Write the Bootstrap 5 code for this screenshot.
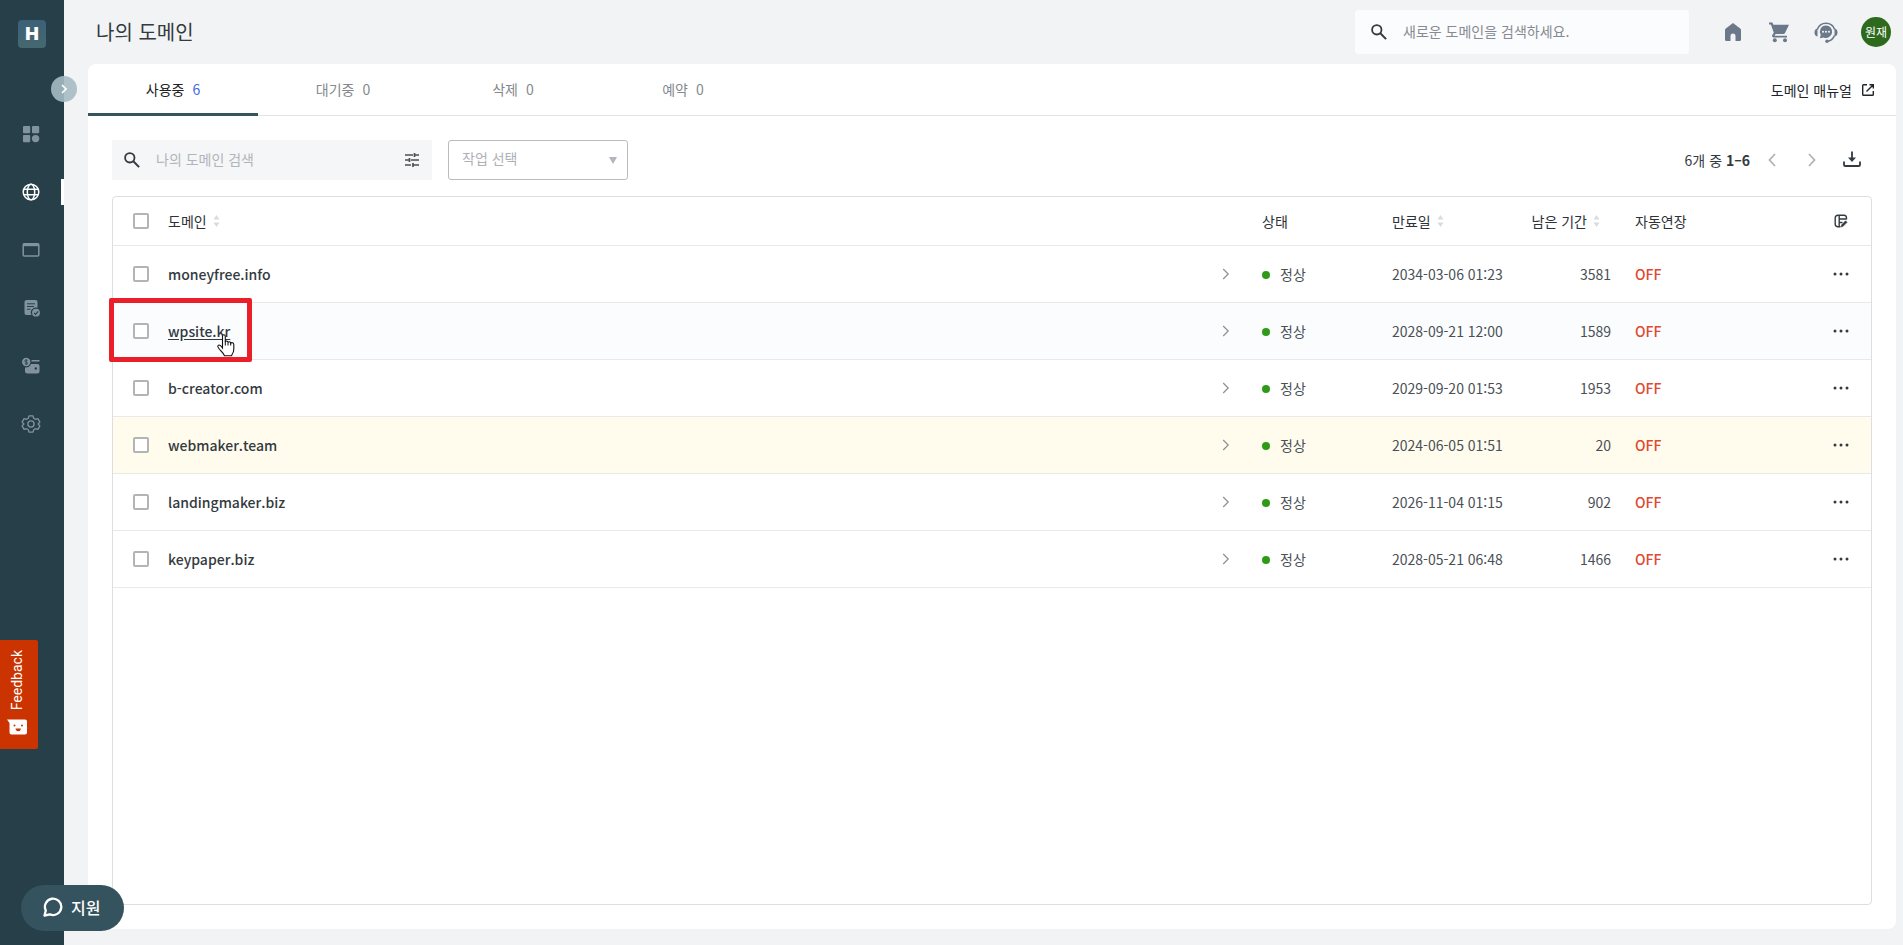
<!DOCTYPE html>
<html lang="ko">
<head>
<meta charset="utf-8">
<meta name="viewport" content="width=device-width, initial-scale=1">
<title>나의 도메인</title>
<link rel="stylesheet" href="https://cdn.jsdelivr.net/npm/bootstrap@5.3.0/dist/css/bootstrap.min.css">
<style>
  body { font-family: "Noto Sans CJK KR", sans-serif; font-size: 14px; line-height: 20px; color: #333a40; background: #f1f3f5; }
  svg { display: block; }
  a { color: inherit; text-decoration: none; }

  /* sidebar */
  .side-rail { width: 64px; background: #263f49; position: sticky; top: 0; height: 100vh; z-index: 5; }
  .brand-tile { width: 28px; height: 28px; border-radius: 4px; background: linear-gradient(#3c6178, #456870); color: #fff; font: 900 18px/28px Inter, sans-serif; text-align: center; margin: 20px 0 57px 18px; }
  .side-link { display: flex; align-items: center; height: 58px; padding-left: 20px; color: #81949d; }
  .side-link.on { color: #fff; background: linear-gradient(#fff, #fff) right center / 3px 26px no-repeat; }
  .rail-toggle { position: absolute; left: 51px; top: 76px; width: 26px; height: 26px; border-radius: 50%; border: 0; padding: 0; background: rgba(166, 187, 195, .9); color: #fff; }

  /* header */
  .top-bar { height: 64px; padding: 0 12px 0 32px; }
  .top-bar h1 { font-size: 20px; line-height: 28px; font-weight: 400; }
  .find-box { width: 334px; height: 44px; border-radius: 4px; background: #fbfcfe; padding: 0 16px; }
  .find-box input, .filter-box input { border: 0; background: none; outline: 0; padding: 0 0 2px; min-width: 0; color: #333a40; }
  .find-box input::placeholder { color: #868b91; opacity: 1; }
  .top-icons { color: #6b788a; gap: 22px; margin-left: 32px; }
  .avatar { width: 30px; height: 30px; border-radius: 50%; background: #2d6a1d; color: #fff; font-size: 12px; border: 0; padding: 0; line-height: 30px; white-space: nowrap; }
  .bare-btn { border: 0; background: none; padding: 0; color: inherit; }

  /* panel */
  .panel { background: #fff; border-radius: 8px; margin: 0 7px 16px 24px; }
  .tab-row { height: 52px; border-bottom: 1px solid #e2e3e5; padding-right: 20px; }
  .tab-row .tab-link { width: 170px; height: 52px; line-height: 20px; padding-top: 15px; text-align: center; color: #84898e; border-bottom: 3px solid transparent; }
  .tab-row .tab-link.on { color: #222; border-color: #36545c; }
  .tab-link span { margin-left: 8px; }
  .tab-link.on span { color: #4169e1; }
  .filter-box { width: 320px; height: 40px; background: #f4f6f8; padding: 0 12px; }
  .filter-box input::placeholder { color: #b1b5b9; opacity: 1; }
  .job-select { width: 180px; height: 40px; border: 1px solid #b9bbbe; border-radius: 3px; color: #aeb1b5; font-size: 14px; line-height: 20px; padding: 7px 13px 11px; appearance: none;
    background: #fff url("data:image/svg+xml,%3Csvg xmlns='http://www.w3.org/2000/svg' viewBox='0 0 8 7'%3E%3Cpath fill='%23b3b5bf' d='M0 0h8L4 7z'/%3E%3C/svg%3E") right 10px center / 8px 7px no-repeat; }
  .pager { padding-right: 2px; }
  .pager span { padding-right: 2px; }
  .pager .save-btn { padding: 0 8px 0 10px; }

  /* table */
  .grid-frame { border: 1px solid #dcdee0; border-radius: 4px; }
  .domain-table { width: 100%; table-layout: fixed; border-collapse: separate; border-spacing: 0; }
  .domain-table th, .domain-table td { padding: 0; border-bottom: 1px solid #e8e9eb; font-weight: 400; white-space: nowrap; }
  .domain-table th { height: 49px; color: #2c3238; }
  .domain-table th .d-flex { gap: 6px; }
  .domain-table td { height: 57px; color: #4a5056; }
  .domain-table td.name { color: #333a40; font-weight: 500; }
  .domain-table .c-menu { color: #333a40; }
  .c-check { width: 55px; } .c-go { width: 48px; } .c-state { width: 130px; } .c-date { width: 119px; }
  .c-left { width: 124px; text-align: right; } .c-auto { width: 176px; } .c-menu { width: 60px; }
  .domain-table td.c-left { padding-right: 24px; }
  .domain-table th.c-left { padding-right: 35px; }
  .domain-table td.c-auto { color: #e04a2f; font-weight: 500; }
  .domain-table tr.hovered td { background: #fafcfe; }
  .domain-table tr.hovered .name a { text-decoration: underline; text-underline-offset: 2px; }
  .domain-table tr.expiring td { background: #fffcee; }
  .tick { display: block; width: 16px; height: 16px; margin: 0 0 0 20px; border: 2px solid #b2b4b6; border-radius: 2px; background: #fff; appearance: none; }
  .tick:checked { background: #36545c; }
  .dot { width: 8px; height: 8px; border-radius: 50%; background: #2e9a18; margin: 2px 10px 0 0; }
  .sorter { color: #d9dbdd; }
  .callout-box { position: absolute; left: -4px; top: -5px; width: 143px; height: 64px; border: 5px solid #ea1f2a; border-radius: 2px; z-index: 2; pointer-events: none; }
  .pointer { position: absolute; left: 49px; top: 31px; z-index: 3; pointer-events: none; }

  /* floating buttons */
  .feedback-btn { position: fixed; left: 0; top: 640px; width: 38px; height: 109px; background: #cb3301; color: #fff; border: 0; border-radius: 0 2px 2px 0; padding: 0 8px 14px 7px; z-index: 10; display: flex; flex-direction: column; justify-content: flex-end; align-items: flex-start; gap: 9px; }
  .feedback-btn span { writing-mode: vertical-rl; transform: rotate(180deg); font: 400 14px/20px Roboto, sans-serif; }
  .support-btn { position: fixed; left: 21px; bottom: 14px; width: 103px; height: 46px; border: 0; border-radius: 23px; background: #34535e; color: #fff; font-size: 16px; font-weight: 500; padding: 0 22px 2px; gap: 8px; z-index: 10; white-space: nowrap; }
</style>
</head>
<body>
<svg width="0" height="0" class="position-absolute" aria-hidden="true">
  <symbol id="i-search" viewBox="0 0 16 16"><circle cx="5.8" cy="5.8" r="4.7" fill="none" stroke="currentColor" stroke-width="1.8"/><path d="M9.3 9.3l5.8 5.8" stroke="currentColor" stroke-width="2"/></symbol>
  <symbol id="i-next" viewBox="0 0 8 14"><path d="M1.2 2l5 5-5 5" fill="none" stroke="currentColor" stroke-width="1.2"/></symbol>
  <symbol id="i-sort" viewBox="0 0 7 12"><path d="M3.5 0l3 4.4h-6zM3.5 12l3-4.4h-6z" fill="currentColor"/></symbol>
  <symbol id="i-dots" viewBox="0 0 16 4"><g fill="currentColor"><circle cx="2" cy="2" r="1.5"/><circle cx="8" cy="2" r="1.5"/><circle cx="14" cy="2" r="1.5"/></g></symbol>
</svg>

<div class="d-flex min-vh-100">
  <nav class="side-rail flex-shrink-0" aria-label="메뉴">
    <a href="#" class="brand-tile d-block">H</a>
    <a href="#" class="side-link" aria-label="대시보드"><svg width="22" height="22" viewBox="0 0 22 22" fill="currentColor"><rect x="3" y="3" width="7.2" height="7.2" rx="1"/><rect x="12" y="3" width="7.2" height="7.2" rx="1"/><rect x="3" y="12" width="7.2" height="7.2" rx="1"/><circle cx="15.6" cy="15.6" r="3.7"/></svg></a>
    <a href="#" class="side-link on" aria-label="도메인"><svg width="22" height="22" viewBox="0 0 22 22" fill="none" stroke="currentColor" stroke-width="1.5"><circle cx="11" cy="11" r="7.8"/><ellipse cx="11" cy="11" rx="3.7" ry="7.8"/><path d="M3.8 8.2h14.4M3.8 13.8h14.4"/></svg></a>
    <a href="#" class="side-link" aria-label="웹사이트"><svg width="22" height="22" viewBox="0 0 22 22" fill="none" stroke="currentColor" stroke-width="1.5"><rect x="3.2" y="4.7" width="15.6" height="12.4" rx="1"/><path d="M3 6h16" stroke-width="2.4"/></svg></a>
    <a href="#" class="side-link" aria-label="인증서"><svg width="22" height="22" viewBox="0 0 22 22"><path fill="currentColor" d="M6.500 3H15.500Q17.500 3 17.500 5v5.800a5 5 0 0 0-6 7.200H6.500q-2 0-2-2V5q0-2 2-2z"/><path d="M7 6.800h8M7 9.500h7M7 12.200h3.500" stroke="#263f49" stroke-width="1"/><circle cx="16" cy="15.700" r="3.900" fill="currentColor"/><path d="M14 15.800l1.500 1.500 2.700-3" fill="none" stroke="#263f49" stroke-width="1.200"/></svg></a>
    <a href="#" class="side-link" aria-label="결제"><svg width="22" height="22" viewBox="0 0 22 22"><path fill="currentColor" d="M11.500 5h8v1.600h-8zM11 9h6.500q2 0 2 2v5.500q0 2-2 2h-10q-2.500 0-2.500-2.500v-3.500a6 6 0 0 0 6-3.500z"/><circle cx="6.200" cy="7" r="4.200" fill="currentColor"/><path d="M7.600 5.400q-2.800-1-2.800.4t1.400 1.300 1.400 1.300-2.800.4M6.200 4.200v5.600" fill="none" stroke="#263f49" stroke-width=".8"/><circle cx="15.800" cy="13.500" r="1.200" fill="#263f49"/></svg></a>
    <a href="#" class="side-link" aria-label="설정"><svg width="22" height="22" viewBox="0 0 22 22" fill="none" stroke="currentColor" stroke-width="1.300" stroke-linejoin="round"><path d="M9 2.900h4l.7 2.400 1.700 1 2.500-.6 2 3.400-1.800 1.900 1.800 1.900-2 3.400-2.500-.6-1.700 1-.7 2.400H9l-.7-2.400-1.700-1-2.500.6-2-3.400L3.900 11 2.100 9.100l2-3.400 2.500.6 1.700-1z"/><circle cx="11" cy="11" r="3.100"/></svg></a>
    <button class="rail-toggle d-flex align-items-center justify-content-center" type="button" aria-label="메뉴 펼치기"><svg width="6" height="10" viewBox="0 0 6 10"><path d="M1 1l4 4-4 4" fill="none" stroke="currentColor" stroke-width="1.700"/></svg></button>
  </nav>

  <div class="d-flex flex-column flex-grow-1">
    <header class="top-bar d-flex align-items-center">
      <h1 class="mb-0 me-auto">나의 도메인</h1>
      <label class="find-box d-flex align-items-center">
        <svg width="16" height="16" class="me-3" aria-label="검색"><use href="#i-search"/></svg>
        <input type="search" class="flex-grow-1" placeholder="새로운 도메인을 검색하세요.">
      </label>
      <div class="top-icons d-flex align-items-center">
        <a href="#" aria-label="홈"><svg width="24" height="24" viewBox="0 0 24 24" fill="currentColor"><path d="M12 3l7.200 5.400q.8.600.8 1.600v9.500q0 1.500-1.500 1.500H14.500v-5a2.500 2.500 0 0 0-5 0v5H5.500Q4 21 4 19.500V10q0-1 .8-1.600z"/></svg></a>
        <a href="#" aria-label="장바구니"><svg width="24" height="24" viewBox="0 0 24 24" fill="currentColor"><path d="M2 2.500h3.400l1 2.200H22l-4 8.300q-.4.900-1.500.9H8.600l-1.100 1.900H20v1.800H6.500q-2-.9-1.200-2.500l1.500-2.400L3.900 4.400H2z"/><circle cx="7.800" cy="20.300" r="2"/><circle cx="18" cy="20.300" r="2"/></svg></a>
        <a href="#" aria-label="고객센터"><svg width="26" height="24" viewBox="0 0 26 24"><path d="M4.300 9.500a9.200 9.200 0 0 1 17.400 0M21.500 15.500a9 9 0 0 1-7.500 5.800" fill="none" stroke="currentColor" stroke-width="1.600"/><path fill="currentColor" d="M4.500 8.500v8Q1.500 16 1.500 12.500t3-4zM21.500 8.500v8q3-.5 3-4t-3-4zM13 5.500a6.200 6.200 0 1 1-2.500 11.900l-3.700.8 1-3.200A6.200 6.200 0 0 1 13 5.500z"/><circle cx="14" cy="21.200" r="1.700" fill="currentColor"/><g fill="#f1f3f5"><circle cx="10" cy="11.700" r="1"/><circle cx="13" cy="11.700" r="1"/><circle cx="16" cy="11.700" r="1"/></g></svg></a>
        <button type="button" class="avatar">원재</button>
      </div>
    </header>

    <main class="panel d-flex flex-column flex-grow-1">
      <div class="tab-row d-flex">
        <a href="#" class="tab-link on">사용중<span>6</span></a>
        <a href="#" class="tab-link">대기중<span>0</span></a>
        <a href="#" class="tab-link">삭제<span>0</span></a>
        <a href="#" class="tab-link">예약<span>0</span></a>
        <a href="#" class="ms-auto d-flex align-items-center gap-2 text-dark">도메인 매뉴얼<svg width="16" height="16" viewBox="0 0 16 16" fill="none" stroke="currentColor" stroke-width="1.400"><path d="M7 2.700H3.500q-.8 0-.8.800v9q0 .8.800.8h9q.8 0 .8-.8V9M9.500 2.700h3.800v3.800M13.300 2.700L6.500 9.500"/></svg></a>
      </div>

      <div class="d-flex align-items-center mt-4 mx-4">
        <label class="filter-box d-flex align-items-center">
          <svg width="16" height="16" class="me-3" aria-label="검색"><use href="#i-search"/></svg>
          <input type="search" class="flex-grow-1" placeholder="나의 도메인 검색">
          <button type="button" class="bare-btn" aria-label="상세 검색"><svg width="16" height="16" viewBox="0 0 16 16" stroke="#4b5054" stroke-width="1.700"><path d="M1 3h8M11 3h4M1 8h4M7 8h8M1 13h6M9.500 13H15M10.500 1v4M5.500 6v4M9 11v4"/></svg></button>
        </label>
        <select class="job-select ms-3" aria-label="작업 선택"><option>작업 선택</option></select>
        <div class="pager ms-auto d-flex align-items-center">
          <span>6개 중 <b>1–6</b></span>
          <button type="button" class="bare-btn px-3" aria-label="이전" disabled><svg width="8" height="14" viewBox="0 0 8 14"><path d="M7 1L1.500 7 7 13" fill="none" stroke="#b0b3b7" stroke-width="1.800"/></svg></button>
          <button type="button" class="bare-btn px-3" aria-label="다음" disabled><svg width="8" height="14" viewBox="0 0 8 14"><path d="M1 1l5.500 6L1 13" fill="none" stroke="#b0b3b7" stroke-width="1.800"/></svg></button>
          <button type="button" class="bare-btn save-btn" aria-label="다운로드"><svg width="20" height="20" viewBox="0 0 20 20" fill="none" stroke="currentColor" stroke-width="1.800"><path d="M2 11.500v3.600q0 .9.900.9h14.200q.9 0 .9-.9v-3.600M10 1.500v8"/><path d="M6 7.500l4 4.500 4-4.500z" fill="currentColor" stroke="none"/></svg></button>
        </div>
      </div>

      <div class="grid-frame flex-grow-1 mt-3 mx-4 mb-4">
        <table class="domain-table">
          <thead>
            <tr>
              <th class="c-check"><input type="checkbox" class="tick" aria-label="전체 선택"></th>
              <th><div class="d-flex align-items-center">도메인<svg class="sorter" width="7" height="12"><use href="#i-sort"/></svg></div></th>
              <th class="c-go"></th>
              <th class="c-state">상태</th>
              <th class="c-date"><div class="d-flex align-items-center">만료일<svg class="sorter" width="7" height="12"><use href="#i-sort"/></svg></div></th>
              <th class="c-left"><div class="d-flex align-items-center justify-content-end">남은 기간<svg class="sorter" width="7" height="12"><use href="#i-sort"/></svg></div></th>
              <th class="c-auto">자동연장</th>
              <th class="c-menu"><button type="button" class="bare-btn d-block mx-auto" aria-label="열 편집"><svg width="16" height="16" viewBox="0 0 16 16" fill="none" stroke="currentColor" stroke-width="1.400"><path d="M7.500 13.700H5q-2.800 0-2.800-2.800V5q0-2.800 2.800-2.800h6q2.500 0 2.500 2.800v1.500M6.200 2.200v11.500M6.200 6h7M6.200 9.500h3.300"/><path d="M8 14l.6-2.200 4-4 1.500 1.500-4 4z" fill="currentColor" stroke-width=".5"/></svg></button></th>
            </tr>
          </thead>
          <tbody id="rows"></tbody>
        </table>
      </div>
    </main>
  </div>
</div>

<button type="button" class="feedback-btn"><span>Feedback</span><svg width="20" height="16" viewBox="0 0 20 16"><path fill="#fff" d="M0 .5h18q2 0 2 2v11q0 2-2 2H4.500q-2 0-2-2V4z"/><g fill="#cb3301"><circle cx="7.500" cy="6.500" r="1"/><circle cx="15" cy="6.500" r="1"/><path d="M8.500 9.500h5.500q-.5 2.800-2.800 2.800T8.500 9.500z"/></g></svg></button>
<button type="button" class="support-btn d-flex align-items-center"><svg width="20" height="20" viewBox="0 0 20 20"><path d="M1.500 18.500l1.300-5A8.200 8.200 0 1 1 7 17.400z" fill="none" stroke="currentColor" stroke-width="2.300" stroke-linejoin="round"/></svg>지원</button>

<script src="https://cdn.jsdelivr.net/npm/bootstrap@5.3.0/dist/js/bootstrap.bundle.min.js"></script>
<script>
  const domains = [
    ["moneyfree.info", "2034-03-06 01:23", 3581],
    ["wpsite.kr", "2028-09-21 12:00", 1589, "hovered"],
    ["b-creator.com", "2029-09-20 01:53", 1953],
    ["webmaker.team", "2024-06-05 01:51", 20, "expiring"],
    ["landingmaker.biz", "2026-11-04 01:15", 902],
    ["keypaper.biz", "2028-05-21 06:48", 1466]
  ];
  const hand = '<svg class="pointer" width="18" height="23" viewBox="0 0 18 23"><path d="M5.500 13V2.500q0-1.700 1.400-1.700t1.400 1.700V8q.3-1 1.400-1t1.300 1.500q.3-.8 1.400-.8T13.700 9.200q.3-.6 1.300-.6 1.800 0 1.800 2V15q0 3-1.600 5l-.6 1.800H7.500Q6.300 19 4.500 17.500 1.800 15 .9 12.900q-.3-1.900 1.300-1.900 1.300 0 3.300 3z" fill="#fff" stroke="#111" stroke-width="1.100"/><path d="M8.300 7.500v4M11 8.500v3M13.700 9.200v2.300" stroke="#111" stroke-width="1"/></svg>';
  document.getElementById("rows").innerHTML = domains.map(([name, date, left, state = ""]) => `
    <tr class="${state}">
      <td class="c-check position-relative"><input type="checkbox" class="tick" aria-label="${name} 선택">${state === "hovered" ? '<span class="callout-box"></span>' : ""}</td>
      <td class="name position-relative"><a href="#">${name}</a>${state === "hovered" ? hand : ""}</td>
      <td><svg width="8" height="14" class="ms-2" color="#8b9095"><use href="#i-next"/></svg></td>
      <td><div class="d-flex align-items-center"><span class="dot"></span>정상</div></td>
      <td>${date}</td>
      <td class="c-left">${left}</td>
      <td class="c-auto">OFF</td>
      <td class="c-menu"><button type="button" class="bare-btn d-block mx-auto" aria-label="더보기"><svg width="16" height="4"><use href="#i-dots"/></svg></button></td>
    </tr>`).join("");
</script>
</body>
</html>
